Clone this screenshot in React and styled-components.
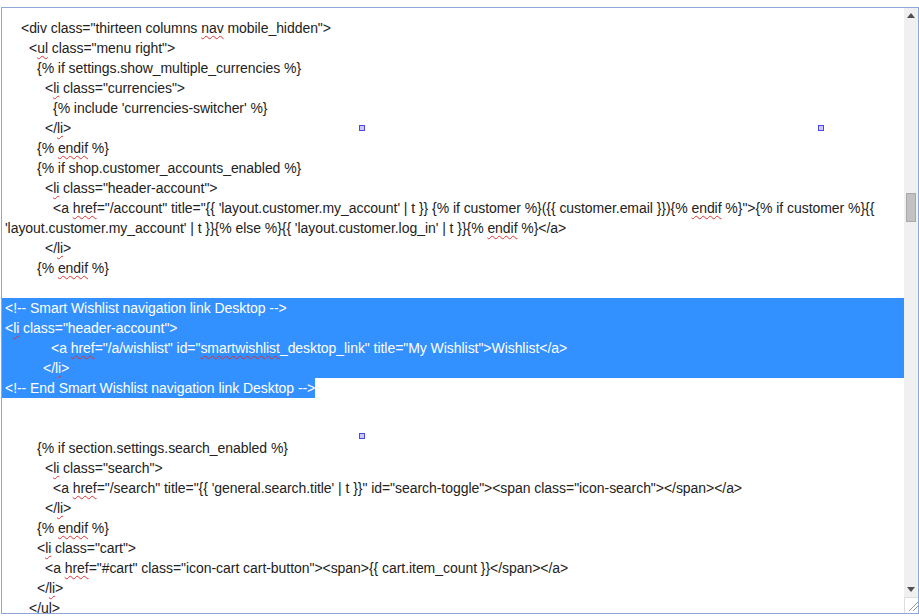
import React from 'react'
import styled, { createGlobalStyle } from 'styled-components'

const Global = createGlobalStyle`
  html, body { margin: 0; padding: 0; background: #fff; }
  body { font-family: "Liberation Sans", Arial, sans-serif; }
`

const Frame = styled.div`
  position: relative;
  margin-top: 7px;
  margin-left: 1px;
  width: 916px;
  height: 605px;
  border: 1px solid #8ea8d8;
  overflow: hidden;
  display: flex;
`

const Editor = styled.div`
  flex: 1;
  padding: 10px 0 0 3px;
  font-size: 14px;
  line-height: 20px;
  letter-spacing: -0.05px;
  color: #222;
  position: relative;
`

const Line = styled.div`
  min-height: 20px;
  text-indent: ${p => p.indent || 0}px;
  white-space: pre-wrap;
  ${p => p.selected && `background: #3390ff; color: #fff; margin-left: -3px; padding-left: 3px;`}
`

const SelEnd = styled.span`
  display: inline-block;
  height: 20px;
  background: #3390ff;
  color: #fff;
  margin-left: -3px;
  padding-left: 3px;
`

const Sp = styled.span`
  text-decoration: underline wavy #e03030;
  text-decoration-thickness: 1px;
  text-underline-offset: 2px;
`

const Handle = styled.span`
  position: absolute;
  width: 4px;
  height: 4px;
  border: 1px solid #4a4ae0;
  background: #c8c8ff;
`

const Scrollbar = styled.div`
  width: 14px;
  background: #f0f0f0;
  display: flex;
  flex-direction: column;
  align-items: center;
`

const Arrow = styled.div`
  height: 15px;
  display: flex;
  align-items: center;
  justify-content: center;
  width: 100%;
`

const Track = styled.div`
  flex: 1;
  width: 100%;
  padding-top: 170px;
`

const Thumb = styled.div`
  margin-left: 2px;
  width: 10px;
  height: 29px;
  background: #c1c1c1;
  border: 1px solid #a9a9a9;
  box-sizing: border-box;
`

const Grip = styled.div`
  height: 15px;
  width: 100%;
  background: #fff;
  border-top: 1px solid #ddd;
  border-left: 1px solid #ddd;
`

export default function App() {
  return (
    <>
      <Global />
      <Frame>
        <Editor>
          <Handle style={{ left: 357, top: 117 }} />
          <Handle style={{ left: 816, top: 117 }} />
          <Handle style={{ left: 357, top: 425 }} />
          <Line indent={16}>{'<div class="thirteen columns '}<Sp>nav</Sp>{' mobile_hidden">'}</Line>
          <Line indent={24}>{'<'}<Sp>ul</Sp>{' class="menu right">'}</Line>
          <Line indent={32}>{'{% if settings.show_multiple_currencies %}'}</Line>
          <Line indent={40}>{'<'}<Sp>li</Sp>{' class="currencies">'}</Line>
          <Line indent={48}>{"{% include 'currencies-switcher' %}"}</Line>
          <Line indent={40}>{'</'}<Sp>li</Sp>{'>'}</Line>
          <Line indent={32}>{'{% '}<Sp>endif</Sp>{' %}'}</Line>
          <Line indent={32}>{'{% if shop.customer_accounts_enabled %}'}</Line>
          <Line indent={40}>{'<'}<Sp>li</Sp>{' class="header-account">'}</Line>
          <Line indent={48}>{'<a '}<Sp>href</Sp>{"=\"/account\" title=\"{{ 'layout.customer.my_account' | t }} {% if customer %}({{ customer.email }}){% "}<Sp>endif</Sp>{" %}\">{% if customer %}{{ 'layout.customer.my_account' | t }}{% else %}{{ 'layout.customer.log_in' | t }}{% "}<Sp>endif</Sp>{' %}</a>'}</Line>
          <Line indent={40}>{'</'}<Sp>li</Sp>{'>'}</Line>
          <Line indent={32}>{'{% '}<Sp>endif</Sp>{' %}'}</Line>
          <Line />
          <Line selected>{'<!-- Smart Wishlist navigation link Desktop -->'}</Line>
          <Line selected>{'<'}<Sp>li</Sp>{' class="header-account">'}</Line>
          <Line selected indent={46}>{'<a '}<Sp>href</Sp>{'="/a/wishlist" id="'}<Sp>smartwishlist</Sp>{'_desktop_link" title="My Wishlist">Wishlist</a>'}</Line>
          <Line selected indent={38}>{'</'}<Sp>li</Sp>{'>'}</Line>
          <Line><SelEnd>{'<!-- End Smart Wishlist navigation link Desktop -->'}</SelEnd></Line>
          <Line />
          <Line />
          <Line indent={32}>{'{% if section.settings.search_enabled %}'}</Line>
          <Line indent={40}>{'<'}<Sp>li</Sp>{' class="search">'}</Line>
          <Line indent={48}>{'<a '}<Sp>href</Sp>{"=\"/search\" title=\"{{ 'general.search.title' | t }}\" id=\"search-toggle\"><span class=\"icon-search\"></span></a>"}</Line>
          <Line indent={40}>{'</'}<Sp>li</Sp>{'>'}</Line>
          <Line indent={32}>{'{% '}<Sp>endif</Sp>{' %}'}</Line>
          <Line indent={32}>{'<'}<Sp>li</Sp>{' class="cart">'}</Line>
          <Line indent={40}>{'<a '}<Sp>href</Sp>{'="#cart" class="icon-cart cart-button"><span>{{ cart.item_count }}</span></a>'}</Line>
          <Line indent={32}>{'</'}<Sp>li</Sp>{'>'}</Line>
          <Line indent={24}>{'</'}<Sp>ul</Sp>{'>'}</Line>
        </Editor>
        <Scrollbar>
          <Arrow>
            <svg width="8" height="5" viewBox="0 0 8 5"><path d="M0 5L4 0L8 5Z" fill="#505050" /></svg>
          </Arrow>
          <Track><Thumb /></Track>
          <Arrow>
            <svg width="8" height="5" viewBox="0 0 8 5"><path d="M0 0L4 5L8 0Z" fill="#505050" /></svg>
          </Arrow>
          <Grip>
            <svg width="14" height="14" viewBox="0 0 14 14"><path d="M4 13L13 4M8 13L13 8" stroke="#999" strokeWidth="1" /></svg>
          </Grip>
        </Scrollbar>
      </Frame>
    </>
  )
}
